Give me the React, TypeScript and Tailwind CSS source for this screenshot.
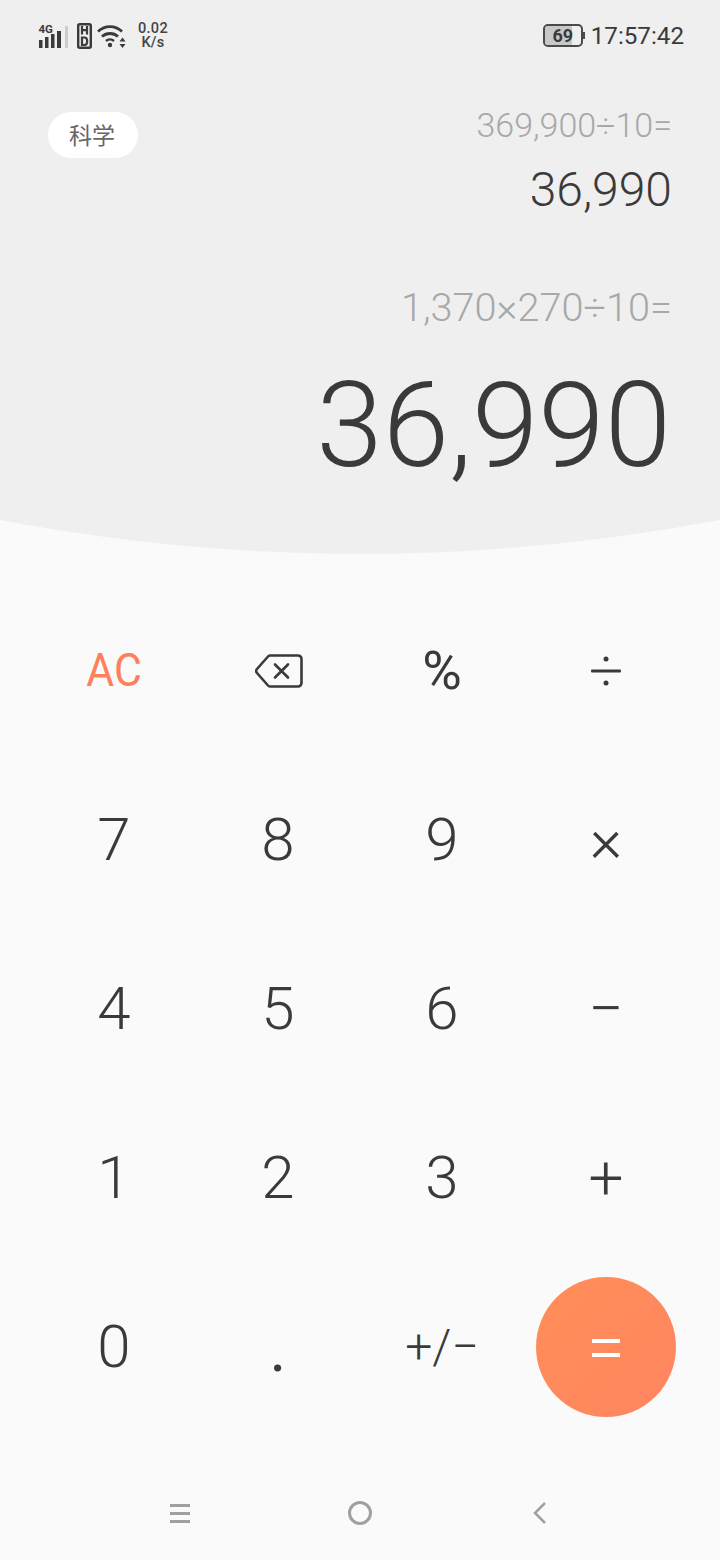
import React from 'react';

const FONT = "font-['Roboto','Liberation_Sans',sans-serif]";

const SignalIcon = () => (
  <svg width="32" height="25" viewBox="0 0 32 25" className="overflow-visible text-[#3a3a3a]">
    <text x="0.500" y="8.500" fontSize="11.500" fontWeight="700" fontFamily="Roboto, sans-serif" fill="currentColor">4G</text>
    <rect x="1" y="16" width="3.500" height="8" fill="currentColor" />
    <rect x="7" y="13" width="3.500" height="11" fill="currentColor" />
    <rect x="13" y="10" width="3.500" height="14" fill="currentColor" />
    <rect x="19" y="7" width="4" height="17" fill="currentColor" />
    <rect x="27" y="2" width="3" height="22" fill="#cdcdcd" />
  </svg>
);

const HdIcon = () => (
  <svg width="15" height="26" viewBox="0 0 15 26" fill="none" stroke="#3a3a3a">
    <rect x="1.200" y="1.200" width="12.600" height="23.600" rx="1.500" strokeWidth="2.400" />
    <path d="M5 3v8.500M10 3v8.500M5 7.200h5" strokeWidth="2.200" />
    <path d="M5 14.500v7.500h2.500c1.800 0 2.700-1.500 2.700-3.750s-.9-3.750-2.700-3.750z" strokeWidth="2.200" />
  </svg>
);

const WifiIcon = () => (
  <svg width="30" height="24" viewBox="0 0 30 24" fill="none" stroke="#3a3a3a" strokeWidth="2.800">
    <path d="M1 7.500C8 1 18 1 25 7.500" />
    <path d="M5 12.500C9.500 8.500 16.500 8.500 21 12.500" />
    <path d="M9 17c2.300-2 5.700-2 8 0" strokeWidth="2.400" />
    <circle cx="13" cy="21" r="2.200" fill="#3a3a3a" stroke="none" />
    <path d="M25.500 13.500l-3 4h6zM25.500 24l-3-4h6z" fill="#3a3a3a" stroke="none" />
  </svg>
);

const BackspaceIcon = () => (
  <svg width="48" height="34" viewBox="0 0 48 34" fill="none" stroke="#3a3a3a" strokeWidth="2.600" strokeLinejoin="round" strokeLinecap="round">
    <path d="M15 1.500H43a3.500 3.500 0 0 1 3.500 3.500v24a3.500 3.500 0 0 1-3.500 3.500H15a3 3 0 0 1-2-1L2 19a3 3 0 0 1 0-4L13 2.500a3 3 0 0 1 2-1z" />
    <path d="M20 10.500l13 13M33 10.500l-13 13" />
  </svg>
);

const DivideIcon = () => (
  <svg width="32" height="34" viewBox="0 0 32 34" fill="#3a3a3a">
    <rect x="1" y="15.500" width="30" height="3" rx="1" />
    <circle cx="16" cy="5" r="2.500" />
    <circle cx="16" cy="29" r="2.500" />
  </svg>
);

const Key = ({ children, className = '' }: { children: React.ReactNode; className?: string }) => (
  <div className={`flex items-center justify-center ${className}`}>{children}</div>
);

const digit = 'text-[60px] leading-none font-light text-[#3a3a3a]';
const op = 'text-[62px] leading-none font-light text-[#3a3a3a]';

export default function App() {
  return (
    <div className={`${FONT} relative flex h-[1560px] w-[720px] flex-col overflow-hidden bg-[#fafafa]`}>
      <div className="h-[520px] bg-[#efefef]">
        {/* status bar */}
        <div className="flex h-[72px] items-center justify-between pl-[38px] pr-[36px]">
          <div className="flex items-center">
            <SignalIcon />
            <div className="ml-[7px]"><HdIcon /></div>
            <div className="ml-[5px]"><WifiIcon /></div>
            <div className="ml-[11px] flex flex-col items-center text-[14.500px] font-medium leading-[14px] tracking-[0.3px] text-[#444]">
              <span>0.02</span>
              <span>K/s</span>
            </div>
          </div>
          <div className="flex items-center gap-[8px]">
            <div className="relative h-[23px] w-[40px] rounded-[5px] border-2 border-[#4a4a4a]">
              <div className="h-full w-[27px] rounded-l-[3px] bg-[#c8c8c8]" />
              <span className="absolute inset-x-0 top-[1px] text-center text-[18px] font-bold leading-[18px] text-[#3a3a3a]">69</span>
              <div className="absolute right-[-4px] top-[6px] h-[7px] w-[2px] bg-[#4a4a4a]" />
            </div>
            <span className="text-[24.200px] font-[450] leading-none text-[#3a3a3a]">17:57:42</span>
          </div>
        </div>

        <div className="flex items-start justify-between pl-[48px] pr-[48px] pt-[33px]">
          <div className="mt-[7px] flex h-[46px] w-[90px] items-center justify-center rounded-full bg-white pb-[2px] pr-[2px] font-['Noto_Sans_CJK_SC',sans-serif] text-[23px] text-[#666]">
            科学
          </div>
          <div className="flex flex-col items-end">
            <div className="text-[34px] font-light leading-[40px] text-[#a8a8a8]">369,900÷10=</div>
            <div className="mt-[21px] text-[48px] font-light leading-[48px] text-[#3a3a3a]">36,990</div>
          </div>
        </div>

        <div className="flex flex-col items-end pr-[49px] pt-[72px]">
          <div className="mr-[-1px] text-[39.700px] font-light leading-[44px] text-[#a8a8a8]">1,370×270÷10=</div>
          <div className="mt-[35px] text-[119.600px] font-light leading-[120px] text-[#3a3a3a]">36,990</div>
        </div>
      </div>

      <svg width="720" height="34" viewBox="0 0 720 34" className="block shrink-0">
        <path d="M0 0Q360 68 720 0z" fill="#efefef" />
      </svg>

      {/* keypad */}
      <div className="mt-[32px] grid grid-cols-[repeat(4,164px)] grid-rows-[repeat(5,169px)] px-[32px]">
        <Key className="scale-x-[0.93] text-[46px] font-normal text-[#ff7f5c]">AC</Key>
        <Key className="pl-[2px]"><BackspaceIcon /></Key>
        <Key className="text-[54px] font-normal leading-none text-[#3a3a3a]">%</Key>
        <Key><DivideIcon /></Key>

        <Key className={digit}>7</Key>
        <Key className={digit}>8</Key>
        <Key className={digit}>9</Key>
        <Key className={op}>×</Key>

        <Key className={digit}>4</Key>
        <Key className={digit}>5</Key>
        <Key className={digit}>6</Key>
        <Key className={op}>−</Key>

        <Key className={digit}>1</Key>
        <Key className={digit}>2</Key>
        <Key className={digit}>3</Key>
        <Key className={op}>+</Key>

        <Key className={digit}>0</Key>
        <Key className="pt-[7px] text-[64px] font-normal leading-none text-[#3a3a3a]">.</Key>
        <Key className="text-[48px] font-light text-[#3a3a3a]">+/−</Key>
        <Key>
          <div className="flex h-[140px] w-[140px] items-center justify-center rounded-full bg-gradient-to-br from-[#ff8e58] to-[#ff8560]">
            <div className="flex flex-col gap-[10px] pt-[2px]">
              <div className="h-[4px] w-[28px] bg-white" />
              <div className="h-[4px] w-[28px] bg-white" />
            </div>
          </div>
        </Key>
      </div>

      {/* nav bar */}
      <div className="mt-[38px] grid grid-cols-3 px-[90px]">
        <div className="flex h-[88px] items-center justify-center">
          <div className="flex flex-col gap-[5px]">
            <div className="h-[3px] w-[20px] bg-[#a0a0a0]" />
            <div className="h-[3px] w-[20px] bg-[#a0a0a0]" />
            <div className="h-[3px] w-[20px] bg-[#a0a0a0]" />
          </div>
        </div>
        <div className="flex h-[88px] items-center justify-center">
          <div className="h-[24px] w-[24px] rounded-full border-[3px] border-[#a0a0a0]" />
        </div>
        <div className="flex h-[88px] items-center justify-center">
          <svg width="14" height="24" viewBox="0 0 14 24" fill="none" stroke="#a0a0a0" strokeWidth="2.500">
            <path d="M12 2L2 12l10 10" />
          </svg>
        </div>
      </div>
    </div>
  );
}
